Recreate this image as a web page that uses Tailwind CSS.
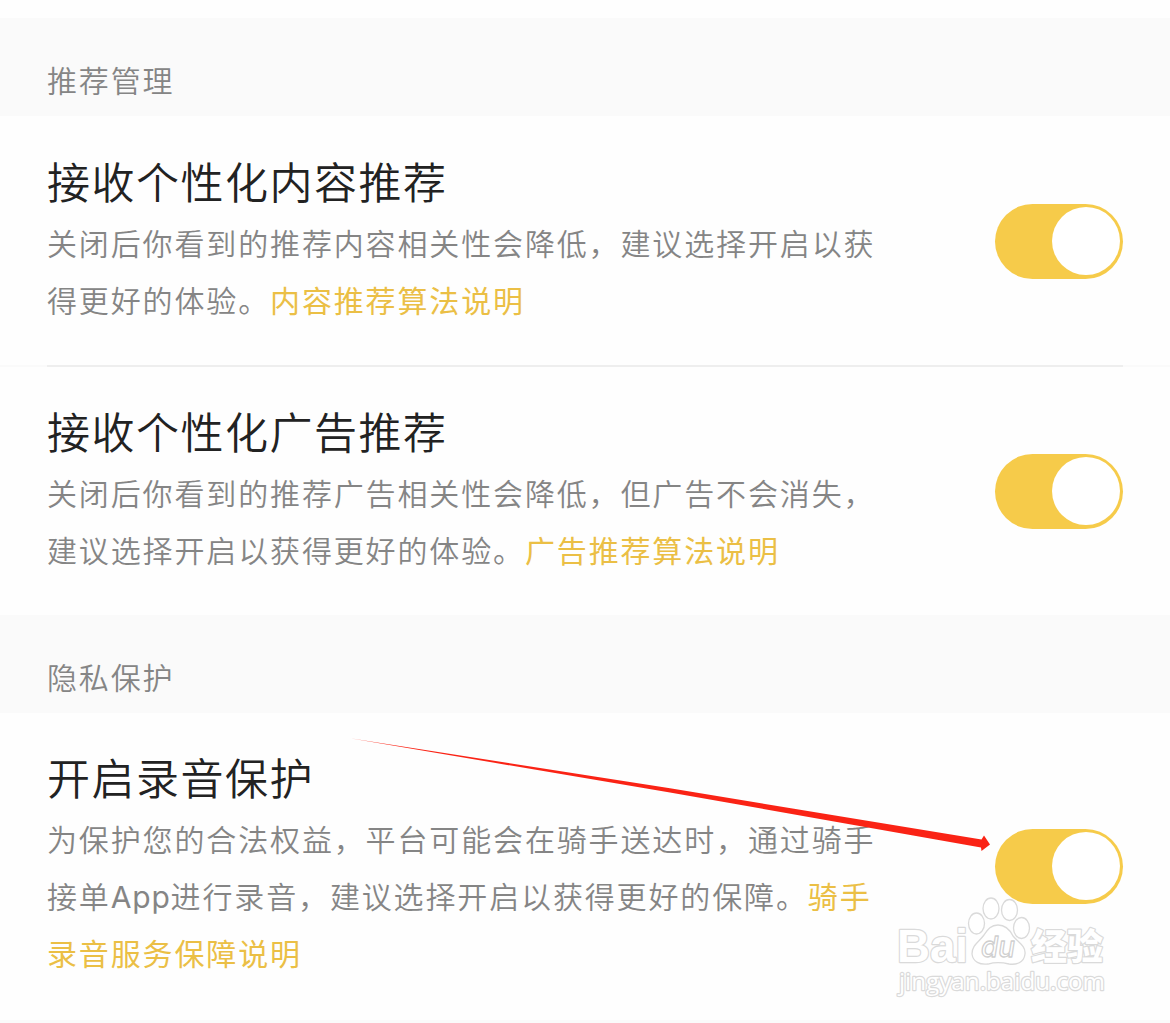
<!DOCTYPE html>
<html lang="zh-CN">
<head>
    <meta charset="UTF-8">
    <meta name="viewport" content="width=device-width, initial-scale=1.0">
    <title>推荐管理</title>
    <script src="https://cdn.jsdelivr.net/npm/@tailwindcss/browser@4"></script>
</head>
<body class="bg-[#fafafa] font-['Noto_Sans_CJK_SC',sans-serif] font-[350]">
    <main class="relative w-[1170px] h-[1023px] overflow-hidden">
        <div class="h-[18px] bg-[#fefefe]"></div>

        <h2 class="h-[98px] pt-[33px] pl-[47px] text-[30px] leading-[56px] tracking-[1.86px] text-[#858585]">推荐管理</h2>

        <section class="h-[249px] pl-[47px] pr-[47px] pt-px flex items-center justify-between bg-[#fefefe]">
            <div class="pb-0.5">
                <h3 class="-mt-1 mb-0.5 text-[43px] leading-[64px] tracking-[1.5px] text-[#222]">接收个性化内容推荐</h3>
                <p class="text-[30px] leading-[57px] tracking-[1.86px] text-[#858585] whitespace-nowrap">关闭后你看到的推荐内容相关性会降低，建议选择开启以获<br>得更好的体验。<a class="font-normal text-[#ebbf45]">内容推荐算法说明</a></p>
            </div>
            <div class="w-32 h-[75px] p-[3px] flex justify-end rounded-full bg-[#f6cb4a]">
                <div class="size-[68px] rounded-full bg-white"></div>
            </div>
        </section>

        <div class="h-[2px] px-[47px] bg-[#fafafa]"><div class="h-full bg-[#eeeeee]"></div></div>

        <section class="h-[248px] pl-[47px] pr-[47px] flex items-center justify-between bg-[#fefefe]">
            <div class="pb-0.5">
                <h3 class="-mt-1 mb-0.5 text-[43px] leading-[64px] tracking-[1.5px] text-[#222]">接收个性化广告推荐</h3>
                <p class="text-[30px] leading-[57px] tracking-[1.86px] text-[#858585] whitespace-nowrap">关闭后你看到的推荐广告相关性会降低，但广告不会消失，<br>建议选择开启以获得更好的体验。<a class="font-normal text-[#ebbf45]">广告推荐算法说明</a></p>
            </div>
            <div class="w-32 h-[75px] p-[3px] flex justify-end rounded-full bg-[#f6cb4a]">
                <div class="size-[68px] rounded-full bg-white"></div>
            </div>
        </section>

        <h2 class="h-[98px] pt-[33px] pl-[47px] text-[30px] leading-[56px] tracking-[1.86px] text-[#858585]">隐私保护</h2>

        <section class="h-[307px] pl-[47px] pr-[47px] flex items-center justify-between bg-[#fefefe]">
            <div class="pb-1">
                <h3 class="-mt-1 mb-0.5 text-[43px] leading-[64px] tracking-[1.5px] text-[#222]">开启录音保护</h3>
                <p class="text-[30px] leading-[57px] tracking-[1.86px] text-[#858585] whitespace-nowrap">为保护您的合法权益，平台可能会在骑手送达时，通过骑手<br>接单<span class="font-['Inter'] font-normal leading-none tracking-[0.8px]">App</span>进行录音，建议选择开启以获得更好的保障。<a class="font-normal text-[#ebbf45]">骑手<br>录音服务保障说明</a></p>
            </div>
            <div class="w-32 h-[75px] p-[3px] flex justify-end rounded-full bg-[#f6cb4a]">
                <div class="size-[68px] rounded-full bg-white"></div>
            </div>
        </section>

        <!-- arrow pointing at the last switch -->
        <svg class="absolute left-[350px] top-[730px] w-[645px] h-[130px]" viewBox="350 730 645 130">
            <path d="M350 738.3L670 788.3L981.5 839.5L984 835.5L990 844.5L981.5 851L981 847.5L670 792.5Z" fill="#fa2315"/>
        </svg>

        <!-- watermark -->
        <svg class="absolute left-[890px] top-[890px] w-[230px] h-[115px]" viewBox="890 890 230 115" fill="#fff" stroke="#dadada" stroke-width="1.3" stroke-linejoin="round">
            <ellipse cx="976.5" cy="923.5" rx="8" ry="10.5"/>
            <ellipse cx="991" cy="908.5" rx="8" ry="10.5"/>
            <ellipse cx="1009.5" cy="910" rx="8" ry="10.5"/>
            <ellipse cx="1021.5" cy="928" rx="8" ry="10.5"/>
            <path d="M998 925C1006 925 1010 930 1013 936C1018 942 1026 946 1025 954C1024 963 1016 965 1009 964C1001 962 995 962 988 964C980 965 973 962 972 954C972 945 979 942 984 935C988 929 991 925 998 925Z"/>
            <g stroke-width="2.4" paint-order="stroke">
                <text x="897" y="962" font-family="Liberation Sans" font-weight="700" font-size="47" textLength="71" lengthAdjust="spacingAndGlyphs">Bai</text>
                <text x="1031" y="960" font-family="Noto Sans CJK SC" font-weight="900" font-size="36" textLength="72" lengthAdjust="spacingAndGlyphs">经验</text>
                <text x="899" y="990" font-family="Open Sans" font-weight="500" font-size="24" textLength="206" lengthAdjust="spacingAndGlyphs">jingyan.baidu.com</text>
            </g>
            <text x="981" y="957" stroke="#cfcfcf" font-family="Inter" font-weight="500" font-style="italic" font-size="29" textLength="34" lengthAdjust="spacingAndGlyphs">du</text>
        </svg>
    </main>
</body>
</html>
